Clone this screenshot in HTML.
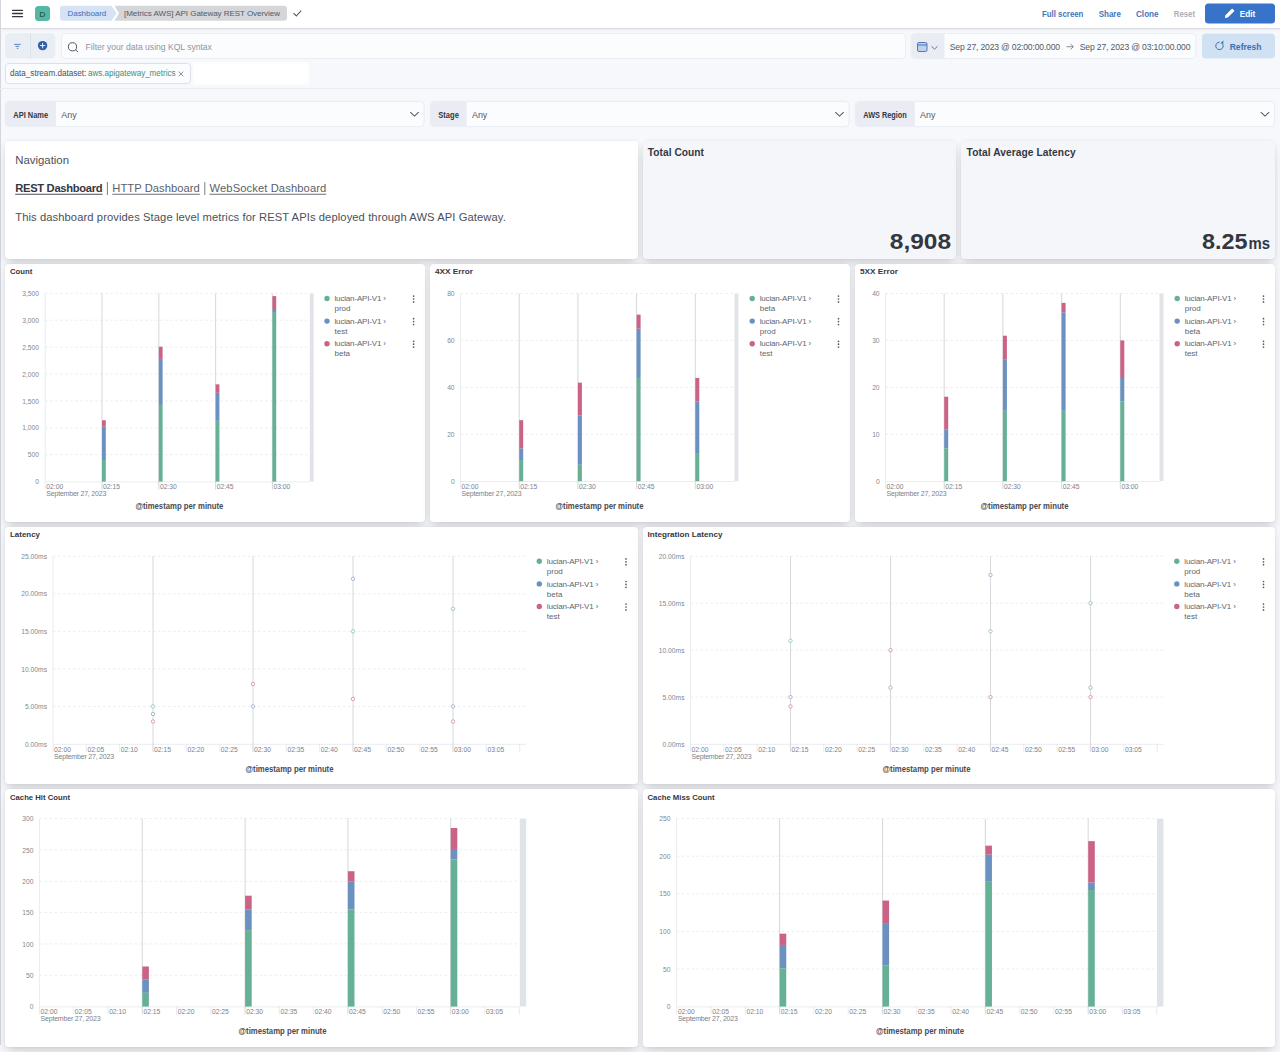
<!DOCTYPE html>
<html><head><meta charset="utf-8"><style>
html,body{margin:0;padding:0;}
body{width:1280px;height:1052px;overflow:hidden;position:relative;background:#F7F8FC;font-family:"Liberation Sans", sans-serif;}
.hdr{position:absolute;left:0;top:0;width:1280px;height:28px;background:#fff;box-shadow:0 1px 0 #D9DADF,0 2px 3px rgba(0,0,0,0.06);}
.lb{position:absolute;left:0;top:0;width:1px;height:1045px;background:#D3D6DC;}
.pnl{position:absolute;border-radius:4px;box-shadow:0 0.9px 4px -1px rgba(0,0,0,.08),0 2.6px 8px -1px rgba(0,0,0,.06),0 5.7px 12px -1px rgba(0,0,0,.05),0 15px 15px -1px rgba(0,0,0,.04);}
svg{position:absolute;left:0;top:0;}
text{font-family:"Liberation Sans", sans-serif;}
</style></head><body>
<div class="hdr"></div>
<div class="lb"></div>
<div class="pnl" style="left:5px;top:141.4px;width:632.5px;height:117.6px;background:#fff"></div>
<div class="pnl" style="left:642.5px;top:141.4px;width:313.75px;height:117.6px;background:#F4F6FA"></div>
<div class="pnl" style="left:961.25px;top:141.4px;width:313.75px;height:117.6px;background:#F4F6FA"></div>
<div class="pnl" style="left:5px;top:263.9px;width:420px;height:258.1px;background:#fff"></div>
<div class="pnl" style="left:430px;top:263.9px;width:420px;height:258.1px;background:#fff"></div>
<div class="pnl" style="left:855px;top:263.9px;width:420px;height:258.1px;background:#fff"></div>
<div class="pnl" style="left:5px;top:526.8px;width:632.5px;height:257.4000000000001px;background:#fff"></div>
<div class="pnl" style="left:642.5px;top:526.8px;width:632.5px;height:257.4000000000001px;background:#fff"></div>
<div class="pnl" style="left:5px;top:789.3px;width:632.5px;height:257.70000000000005px;background:#fff"></div>
<div class="pnl" style="left:642.5px;top:789.3px;width:632.5px;height:257.70000000000005px;background:#fff"></div>
<svg width="1280" height="1052" viewBox="0 0 1280 1052">
<defs><filter id="blur1" x="-10%" y="-30%" width="120%" height="160%"><feGaussianBlur stdDeviation="0.8"/></filter></defs>
<line x1="12.5" y1="10.3" x2="22.5" y2="10.3" stroke="#343741" stroke-width="1.3" stroke-linecap="round"/>
<line x1="12.5" y1="13.5" x2="22.5" y2="13.5" stroke="#343741" stroke-width="1.3" stroke-linecap="round"/>
<line x1="12.5" y1="16.6" x2="22.5" y2="16.6" stroke="#343741" stroke-width="1.3" stroke-linecap="round"/>
<rect x="35" y="6" width="15" height="15" rx="3.5" fill="#54B8A4"/>
<text x="42.5" y="16.6" font-size="8" fill="#1e3b33" text-anchor="middle">D</text>
<path d="M63,5.8 H111.6 L116.6,13.3 L111.6,20.8 H63 Q60,20.8 60,17.8 V8.8 Q60,5.8 63,5.8 Z" fill="#D5E3F5"/>
<text x="67.5" y="16.4" font-size="8" fill="#3F6DB5" text-anchor="start" textLength="38.8" lengthAdjust="spacing">Dashboard</text>
<path d="M114.4,5.8 H284 Q287,5.8 287,8.8 V17.8 Q287,20.8 284,20.8 H114.4 L119,13.3 Z" fill="#D5D6DA"/>
<text x="124" y="16.4" font-size="8" fill="#535966" text-anchor="start" textLength="156" lengthAdjust="spacing">[Metrics AWS] API Gateway REST Overview</text>
<path d="M293.5,13.2 L296.3,16 L301.2,10.6" fill="none" stroke="#535966" stroke-width="1.1"/>
<text x="1042" y="16.8" font-size="9" font-weight="bold" fill="#4674BA" text-anchor="start" textLength="41.4" lengthAdjust="spacingAndGlyphs">Full screen</text>
<text x="1098.7" y="16.8" font-size="9" font-weight="bold" fill="#4674BA" text-anchor="start" textLength="22.2" lengthAdjust="spacingAndGlyphs">Share</text>
<text x="1136" y="16.8" font-size="9" font-weight="bold" fill="#4674BA" text-anchor="start" textLength="22.6" lengthAdjust="spacingAndGlyphs">Clone</text>
<text x="1173.8" y="16.8" font-size="9" font-weight="bold" fill="#A7AFBC" text-anchor="start" textLength="21.2" lengthAdjust="spacingAndGlyphs">Reset</text>
<rect x="1205" y="3.5" width="70" height="20" rx="3.5" fill="#3773C8"/>
<path d="M1224.9,18.1 L1225.4,15.2 L1231.6,9.0 Q1232.2,8.4 1232.8,9.0 L1234.0,10.2 Q1234.6,10.8 1234.0,11.4 L1227.8,17.6 Z" fill="#fff"/>
<text x="1239.7" y="16.8" font-size="9" font-weight="bold" fill="#fff" text-anchor="start" textLength="15.6" lengthAdjust="spacingAndGlyphs">Edit</text>
<rect x="5.1" y="33.3" width="50.2" height="25.3" rx="4.5" fill="#E9EDF4"/>
<line x1="30.5" y1="33.5" x2="30.5" y2="58.5" stroke="#D9DEE7" stroke-width="0.8"/>
<line x1="14.1" y1="44.4" x2="20.7" y2="44.4" stroke="#3F6DB5" stroke-width="0.8"/>
<line x1="15.5" y1="46.4" x2="19.2" y2="46.4" stroke="#3F6DB5" stroke-width="0.8"/>
<line x1="16.8" y1="48.4" x2="18.3" y2="48.4" stroke="#3F6DB5" stroke-width="0.8"/>
<circle cx="42.6" cy="45.6" r="4.7" fill="#2C5EA9"/>
<line x1="39.9" y1="45.6" x2="45.3" y2="45.6" stroke="#fff" stroke-width="0.9"/>
<line x1="42.6" y1="42.9" x2="42.6" y2="48.3" stroke="#fff" stroke-width="0.9"/>
<rect x="61.5" y="33.5" width="844" height="25" rx="4" fill="#FBFCFD" stroke="#E6EAF0" stroke-width="0.8"/>
<circle cx="72.5" cy="46.8" r="4.1" fill="none" stroke="#535966" stroke-width="1"/>
<line x1="75.4" y1="49.7" x2="78" y2="52" stroke="#535966" stroke-width="1"/>
<text x="85.6" y="50" font-size="8.6" fill="#8E95A2" text-anchor="start" textLength="126.3" lengthAdjust="spacing">Filter your data using KQL syntax</text>
<rect x="911" y="33.5" width="285" height="25" rx="4" fill="#FBFCFD" stroke="#E6EAF0" stroke-width="0.8"/>
<path d="M915,33.9 H944.5 V58.1 H915 Q911.4,58.1 911.4,54.5 V37.5 Q911.4,33.9 915,33.9 Z" fill="#E9EDF3"/>
<rect x="917.5" y="42.5" width="9.5" height="9" rx="1.5" fill="#BFD2EC" stroke="#3F6DB5" stroke-width="0.9"/>
<line x1="917.5" y1="45" x2="927" y2="45" stroke="#3F6DB5" stroke-width="0.9"/>
<path d="M931.5,46.3 L934.5,49.2 L937.5,46.3" fill="none" stroke="#3F6DB5" stroke-width="0.9"/>
<text x="949.8" y="50" font-size="8.6" fill="#535966" text-anchor="start" textLength="110.3" lengthAdjust="spacing">Sep 27, 2023 @ 02:00:00.000</text>
<path d="M1066.5,46.7 H1073.3 M1070.6,44 L1073.3,46.7 L1070.6,49.4" fill="none" stroke="#69707D" stroke-width="0.8"/>
<text x="1079.8" y="50" font-size="8.6" fill="#535966" text-anchor="start" textLength="110.7" lengthAdjust="spacing">Sep 27, 2023 @ 03:10:00.000</text>
<rect x="1202" y="33.5" width="73" height="25" rx="4" fill="#CFE1F3"/>
<path d="M1222.7,44.1 A3.7,3.7 0 1 1 1219.6,42.2" fill="none" stroke="#3F6DB5" stroke-width="1.0"/>
<path d="M1223.4,40.6 L1223.4,43.8 L1220.4,43.6 Z" fill="#3F6DB5"/>
<text x="1229.7" y="49.7" font-size="9.2" font-weight="bold" fill="#3F6DB5" text-anchor="start" textLength="31.9" lengthAdjust="spacingAndGlyphs">Refresh</text>
<rect x="5.5" y="63.5" width="185" height="20" rx="3" fill="#FBFCFD" stroke="#D3DAE6" stroke-width="0.8"/>
<text x="10" y="75.9" font-size="8.5" fill="#4A4F58" text-anchor="start" textLength="76.3" lengthAdjust="spacingAndGlyphs">data_stream.dataset:</text>
<text x="88" y="75.9" font-size="8.5" fill="#418F7E" text-anchor="start" textLength="87.5" lengthAdjust="spacingAndGlyphs">aws.apigateway_metrics</text>
<path d="M178.7,71.6 L183.3,76.2 M183.3,71.6 L178.7,76.2" fill="none" stroke="#69707D" stroke-width="0.8"/>
<rect x="193" y="62.5" width="116" height="22" fill="#fff" filter="url(#blur1)"/>
<line x1="0" y1="88.5" x2="1280" y2="88.5" stroke="#E9ECF2" stroke-width="1"/>
<rect x="5.4" y="101.4" width="418.7" height="25.2" rx="4" fill="#FBFCFD" stroke="#E3E8F0" stroke-width="0.8"/>
<path d="M9.4,101.8 H56 V126.2 H9.4 Q5.8,126.2 5.8,122.6 V105.4 Q5.8,101.8 9.4,101.8 Z" fill="#E9EDF3"/>
<text x="13.3" y="117.8" font-size="8.2" font-weight="bold" fill="#343741" text-anchor="start" textLength="34.8" lengthAdjust="spacingAndGlyphs">API Name</text>
<text x="61.3" y="117.8" font-size="9.3" fill="#535966" text-anchor="start" textLength="15.3" lengthAdjust="spacingAndGlyphs">Any</text>
<path d="M410.3,112.2 L414.5,116.1 L418.7,112.2" fill="none" stroke="#535966" stroke-width="1.1"/>
<rect x="430.4" y="101.4" width="418.7" height="25.2" rx="4" fill="#FBFCFD" stroke="#E3E8F0" stroke-width="0.8"/>
<path d="M434.4,101.8 H466.7 V126.2 H434.4 Q430.8,126.2 430.8,122.6 V105.4 Q430.8,101.8 434.4,101.8 Z" fill="#E9EDF3"/>
<text x="438.3" y="117.8" font-size="8.2" font-weight="bold" fill="#343741" text-anchor="start" textLength="20.6" lengthAdjust="spacingAndGlyphs">Stage</text>
<text x="472.0" y="117.8" font-size="9.3" fill="#535966" text-anchor="start" textLength="15.3" lengthAdjust="spacingAndGlyphs">Any</text>
<path d="M835.3,112.2 L839.5,116.1 L843.7,112.2" fill="none" stroke="#535966" stroke-width="1.1"/>
<rect x="855.4" y="101.4" width="419.2" height="25.2" rx="4" fill="#FBFCFD" stroke="#E3E8F0" stroke-width="0.8"/>
<path d="M859.4,101.8 H914.8 V126.2 H859.4 Q855.8,126.2 855.8,122.6 V105.4 Q855.8,101.8 859.4,101.8 Z" fill="#E9EDF3"/>
<text x="863.3" y="117.8" font-size="8.2" font-weight="bold" fill="#343741" text-anchor="start" textLength="43.5" lengthAdjust="spacingAndGlyphs">AWS Region</text>
<text x="920.0999999999999" y="117.8" font-size="9.3" fill="#535966" text-anchor="start" textLength="15.3" lengthAdjust="spacingAndGlyphs">Any</text>
<path d="M1260.8,112.2 L1265,116.1 L1269.2,112.2" fill="none" stroke="#535966" stroke-width="1.1"/>
<text x="15.2" y="164.2" font-size="11.4" fill="#4B5059" text-anchor="start" textLength="53.8" lengthAdjust="spacing">Navigation</text>
<text x="15.2" y="192.2" font-size="11.2" font-weight="bold" fill="#343741" text-anchor="start" textLength="87.4" lengthAdjust="spacing">REST Dashboard</text>
<line x1="15.2" y1="194.2" x2="102.6" y2="194.2" stroke="#4A4E56" stroke-width="1.1"/>
<line x1="107.4" y1="182" x2="107.4" y2="195" stroke="#6B6F76" stroke-width="0.9"/>
<text x="112.3" y="192.2" font-size="11.2" fill="#5A5F68" text-anchor="start" textLength="87.5" lengthAdjust="spacing">HTTP Dashboard</text>
<line x1="112.3" y1="194.2" x2="199.8" y2="194.2" stroke="#6D717A" stroke-width="1.1"/>
<line x1="204.8" y1="182" x2="204.8" y2="195" stroke="#6B6F76" stroke-width="0.9"/>
<text x="209.5" y="192.2" font-size="11.2" fill="#5A5F68" text-anchor="start" textLength="116.8" lengthAdjust="spacing">WebSocket Dashboard</text>
<line x1="209.5" y1="194.2" x2="326.3" y2="194.2" stroke="#6D717A" stroke-width="1.1"/>
<text x="15.2" y="220.8" font-size="11.2" fill="#4B5059" text-anchor="start" textLength="490.6" lengthAdjust="spacing">This dashboard provides Stage level metrics for REST APIs deployed through AWS API Gateway.</text>
<text x="647.8" y="156" font-size="10.2" font-weight="bold" fill="#343741" text-anchor="start" textLength="56.2" lengthAdjust="spacing">Total Count</text>
<text x="951" y="249" font-size="22" font-weight="bold" fill="#343741" text-anchor="end" textLength="61.2" lengthAdjust="spacingAndGlyphs">8,908</text>
<text x="966.6" y="156" font-size="10.2" font-weight="bold" fill="#343741" text-anchor="start" textLength="109" lengthAdjust="spacing">Total Average Latency</text>
<text x="1247.4" y="249.2" font-size="22" font-weight="bold" fill="#343741" text-anchor="end" textLength="45.5" lengthAdjust="spacingAndGlyphs">8.25</text>
<text x="1270" y="249.2" font-size="16.5" font-weight="bold" fill="#343741" text-anchor="end" textLength="21.6" lengthAdjust="spacingAndGlyphs">ms</text>
<text x="10" y="274.09999999999997" font-size="8.1" font-weight="bold" fill="#343741" text-anchor="start" textLength="22.3" lengthAdjust="spacingAndGlyphs">Count</text>
<text x="39" y="484.20000000000005" font-size="7.2" fill="#81878F" text-anchor="end" textLength="3.72" lengthAdjust="spacingAndGlyphs">0</text>
<line x1="45.2" y1="454.70000000000005" x2="310" y2="454.70000000000005" stroke="#E6E9EE" stroke-width="0.8" stroke-dasharray="2.5,2.5"/>
<text x="39" y="457.30000000000007" font-size="7.2" fill="#81878F" text-anchor="end" textLength="11.17" lengthAdjust="spacingAndGlyphs">500</text>
<line x1="45.2" y1="427.8" x2="310" y2="427.8" stroke="#E6E9EE" stroke-width="0.8" stroke-dasharray="2.5,2.5"/>
<text x="39" y="430.40000000000003" font-size="7.2" fill="#81878F" text-anchor="end" textLength="16.76" lengthAdjust="spacingAndGlyphs">1,000</text>
<line x1="45.2" y1="400.9" x2="310" y2="400.9" stroke="#E6E9EE" stroke-width="0.8" stroke-dasharray="2.5,2.5"/>
<text x="39" y="403.5" font-size="7.2" fill="#81878F" text-anchor="end" textLength="16.76" lengthAdjust="spacingAndGlyphs">1,500</text>
<line x1="45.2" y1="374.0" x2="310" y2="374.0" stroke="#E6E9EE" stroke-width="0.8" stroke-dasharray="2.5,2.5"/>
<text x="39" y="376.6" font-size="7.2" fill="#81878F" text-anchor="end" textLength="16.76" lengthAdjust="spacingAndGlyphs">2,000</text>
<line x1="45.2" y1="347.1" x2="310" y2="347.1" stroke="#E6E9EE" stroke-width="0.8" stroke-dasharray="2.5,2.5"/>
<text x="39" y="349.70000000000005" font-size="7.2" fill="#81878F" text-anchor="end" textLength="16.76" lengthAdjust="spacingAndGlyphs">2,500</text>
<line x1="45.2" y1="320.2" x2="310" y2="320.2" stroke="#E6E9EE" stroke-width="0.8" stroke-dasharray="2.5,2.5"/>
<text x="39" y="322.8" font-size="7.2" fill="#81878F" text-anchor="end" textLength="16.76" lengthAdjust="spacingAndGlyphs">3,000</text>
<line x1="45.2" y1="293.3" x2="310" y2="293.3" stroke="#E6E9EE" stroke-width="0.8" stroke-dasharray="2.5,2.5"/>
<text x="39" y="295.90000000000003" font-size="7.2" fill="#81878F" text-anchor="end" textLength="16.76" lengthAdjust="spacingAndGlyphs">3,500</text>
<line x1="45.2" y1="293.3" x2="45.2" y2="481.6" stroke="#E9ECF1" stroke-width="1"/>
<line x1="45.2" y1="481.90000000000003" x2="310" y2="481.90000000000003" stroke="#E9ECF1" stroke-width="1"/>
<line x1="45.2" y1="481.6" x2="45.2" y2="489.6" stroke="#E3E6EB" stroke-width="0.8"/>
<text x="46.300000000000004" y="489.1" font-size="7.1" fill="#7B818C" text-anchor="start" textLength="16.88" lengthAdjust="spacingAndGlyphs">02:00</text>
<line x1="102.0" y1="293.3" x2="102.0" y2="489.6" stroke="#D9DADE" stroke-width="1.1"/>
<text x="103.1" y="489.1" font-size="7.1" fill="#7B818C" text-anchor="start" textLength="16.88" lengthAdjust="spacingAndGlyphs">02:15</text>
<line x1="158.8" y1="293.3" x2="158.8" y2="489.6" stroke="#D9DADE" stroke-width="1.1"/>
<text x="159.9" y="489.1" font-size="7.1" fill="#7B818C" text-anchor="start" textLength="16.88" lengthAdjust="spacingAndGlyphs">02:30</text>
<line x1="215.60000000000002" y1="293.3" x2="215.60000000000002" y2="489.6" stroke="#D9DADE" stroke-width="1.1"/>
<text x="216.70000000000002" y="489.1" font-size="7.1" fill="#7B818C" text-anchor="start" textLength="16.88" lengthAdjust="spacingAndGlyphs">02:45</text>
<line x1="272.4" y1="293.3" x2="272.4" y2="489.6" stroke="#D9DADE" stroke-width="1.1"/>
<text x="273.5" y="489.1" font-size="7.1" fill="#7B818C" text-anchor="start" textLength="16.88" lengthAdjust="spacingAndGlyphs">03:00</text>
<text x="46.300000000000004" y="496.20000000000005" font-size="7.0" fill="#7B818C" text-anchor="start" textLength="60" lengthAdjust="spacing">September 27, 2023</text>
<rect x="309.8" y="293.3" width="3.8000000000000114" height="188.3" rx="0" fill="#E0E3E8"/>
<rect x="102.0" y="460.08000000000004" width="3.8" height="21.519999999999982" rx="0" fill="#66B196"/>
<rect x="102.0" y="426.72400000000005" width="3.8" height="33.355999999999995" rx="0" fill="#6A91C0"/>
<rect x="102.0" y="420.26800000000003" width="3.8" height="6.456000000000017" rx="0" fill="#CA6386"/>
<rect x="158.8" y="404.935" width="3.8" height="76.66500000000002" rx="0" fill="#66B196"/>
<rect x="158.8" y="358.8822" width="3.8" height="46.05279999999999" rx="0" fill="#6A91C0"/>
<rect x="158.8" y="346.7234" width="3.8" height="12.158799999999985" rx="0" fill="#CA6386"/>
<rect x="215.60000000000002" y="420.80600000000004" width="3.8" height="60.79399999999998" rx="0" fill="#66B196"/>
<rect x="215.60000000000002" y="392.83000000000004" width="3.8" height="27.976" rx="0" fill="#6A91C0"/>
<rect x="215.60000000000002" y="384.3296" width="3.8" height="8.500400000000013" rx="0" fill="#CA6386"/>
<rect x="272.4" y="312.0224" width="3.8" height="169.57760000000002" rx="0" fill="#66B196"/>
<rect x="272.4" y="309.978" width="3.8" height="2.044399999999996" rx="0" fill="#6A91C0"/>
<rect x="272.4" y="296.09760000000006" width="3.8" height="13.880399999999952" rx="0" fill="#CA6386"/>
<circle cx="327" cy="298.5" r="2.7" fill="#66B196"/>
<text x="334.5" y="301.1" font-size="8" fill="#60666F" text-anchor="start" textLength="51.5" lengthAdjust="spacing">lucian-API-V1 ›</text>
<text x="334.5" y="311.1" font-size="8" fill="#60666F" text-anchor="start">prod</text>
<circle cx="413.6" cy="296.1" r="0.85" fill="#535966"/>
<circle cx="413.6" cy="299.0" r="0.85" fill="#535966"/>
<circle cx="413.6" cy="301.9" r="0.85" fill="#535966"/>
<circle cx="327" cy="321.1" r="2.7" fill="#6A91C0"/>
<text x="334.5" y="323.70000000000005" font-size="8" fill="#60666F" text-anchor="start" textLength="51.5" lengthAdjust="spacing">lucian-API-V1 ›</text>
<text x="334.5" y="333.70000000000005" font-size="8" fill="#60666F" text-anchor="start">test</text>
<circle cx="413.6" cy="318.70000000000005" r="0.85" fill="#535966"/>
<circle cx="413.6" cy="321.6" r="0.85" fill="#535966"/>
<circle cx="413.6" cy="324.5" r="0.85" fill="#535966"/>
<circle cx="327" cy="343.7" r="2.7" fill="#CA6386"/>
<text x="334.5" y="346.3" font-size="8" fill="#60666F" text-anchor="start" textLength="51.5" lengthAdjust="spacing">lucian-API-V1 ›</text>
<text x="334.5" y="356.3" font-size="8" fill="#60666F" text-anchor="start">beta</text>
<circle cx="413.6" cy="341.3" r="0.85" fill="#535966"/>
<circle cx="413.6" cy="344.2" r="0.85" fill="#535966"/>
<circle cx="413.6" cy="347.09999999999997" r="0.85" fill="#535966"/>
<text x="179.4" y="509.4" font-size="8.4" font-weight="bold" fill="#484C55" text-anchor="middle" textLength="88" lengthAdjust="spacingAndGlyphs">@timestamp per minute</text>
<text x="435" y="274.09999999999997" font-size="8.1" font-weight="bold" fill="#343741" text-anchor="start" textLength="38" lengthAdjust="spacingAndGlyphs">4XX Error</text>
<text x="454.6" y="483.8" font-size="7.2" fill="#81878F" text-anchor="end" textLength="3.72" lengthAdjust="spacingAndGlyphs">0</text>
<line x1="460.5" y1="434.275" x2="734.5" y2="434.275" stroke="#E6E9EE" stroke-width="0.8" stroke-dasharray="2.5,2.5"/>
<text x="454.6" y="436.875" font-size="7.2" fill="#81878F" text-anchor="end" textLength="7.45" lengthAdjust="spacingAndGlyphs">20</text>
<line x1="460.5" y1="387.35" x2="734.5" y2="387.35" stroke="#E6E9EE" stroke-width="0.8" stroke-dasharray="2.5,2.5"/>
<text x="454.6" y="389.95000000000005" font-size="7.2" fill="#81878F" text-anchor="end" textLength="7.45" lengthAdjust="spacingAndGlyphs">40</text>
<line x1="460.5" y1="340.425" x2="734.5" y2="340.425" stroke="#E6E9EE" stroke-width="0.8" stroke-dasharray="2.5,2.5"/>
<text x="454.6" y="343.02500000000003" font-size="7.2" fill="#81878F" text-anchor="end" textLength="7.45" lengthAdjust="spacingAndGlyphs">60</text>
<line x1="460.5" y1="293.5" x2="734.5" y2="293.5" stroke="#E6E9EE" stroke-width="0.8" stroke-dasharray="2.5,2.5"/>
<text x="454.6" y="296.1" font-size="7.2" fill="#81878F" text-anchor="end" textLength="7.45" lengthAdjust="spacingAndGlyphs">80</text>
<line x1="460.5" y1="293.5" x2="460.5" y2="481.2" stroke="#E9ECF1" stroke-width="1"/>
<line x1="460.5" y1="481.5" x2="734.5" y2="481.5" stroke="#E9ECF1" stroke-width="1"/>
<line x1="460.5" y1="481.2" x2="460.5" y2="489.2" stroke="#E3E6EB" stroke-width="0.8"/>
<text x="461.6" y="488.7" font-size="7.1" fill="#7B818C" text-anchor="start" textLength="16.88" lengthAdjust="spacingAndGlyphs">02:00</text>
<line x1="519.2" y1="293.5" x2="519.2" y2="489.2" stroke="#D9DADE" stroke-width="1.1"/>
<text x="520.3000000000001" y="488.7" font-size="7.1" fill="#7B818C" text-anchor="start" textLength="16.88" lengthAdjust="spacingAndGlyphs">02:15</text>
<line x1="577.9" y1="293.5" x2="577.9" y2="489.2" stroke="#D9DADE" stroke-width="1.1"/>
<text x="579.0" y="488.7" font-size="7.1" fill="#7B818C" text-anchor="start" textLength="16.88" lengthAdjust="spacingAndGlyphs">02:30</text>
<line x1="636.6" y1="293.5" x2="636.6" y2="489.2" stroke="#D9DADE" stroke-width="1.1"/>
<text x="637.7" y="488.7" font-size="7.1" fill="#7B818C" text-anchor="start" textLength="16.88" lengthAdjust="spacingAndGlyphs">02:45</text>
<line x1="695.3" y1="293.5" x2="695.3" y2="489.2" stroke="#D9DADE" stroke-width="1.1"/>
<text x="696.4" y="488.7" font-size="7.1" fill="#7B818C" text-anchor="start" textLength="16.88" lengthAdjust="spacingAndGlyphs">03:00</text>
<text x="461.6" y="495.8" font-size="7.0" fill="#7B818C" text-anchor="start" textLength="60" lengthAdjust="spacing">September 27, 2023</text>
<rect x="734.5" y="293.5" width="3.8999999999999773" height="187.7" rx="0" fill="#E0E3E8"/>
<rect x="519.2" y="460.08375" width="4" height="21.11624999999998" rx="0" fill="#66B196"/>
<rect x="519.2" y="448.35249999999996" width="4" height="11.731250000000045" rx="0" fill="#6A91C0"/>
<rect x="519.2" y="420.1975" width="4" height="28.154999999999973" rx="0" fill="#CA6386"/>
<rect x="577.9" y="464.77625" width="4" height="16.423749999999984" rx="0" fill="#66B196"/>
<rect x="577.9" y="415.505" width="4" height="49.27125000000001" rx="0" fill="#6A91C0"/>
<rect x="577.9" y="382.6575" width="4" height="32.84749999999997" rx="0" fill="#CA6386"/>
<rect x="636.6" y="377.96500000000003" width="4" height="103.23499999999996" rx="0" fill="#66B196"/>
<rect x="636.6" y="328.69375" width="4" height="49.27125000000001" rx="0" fill="#6A91C0"/>
<rect x="636.6" y="314.61625000000004" width="4" height="14.077499999999986" rx="0" fill="#CA6386"/>
<rect x="695.3" y="453.045" width="4" height="28.154999999999973" rx="0" fill="#66B196"/>
<rect x="695.3" y="401.4275" width="4" height="51.61750000000001" rx="0" fill="#6A91C0"/>
<rect x="695.3" y="377.96500000000003" width="4" height="23.462499999999977" rx="0" fill="#CA6386"/>
<circle cx="752.2" cy="298.5" r="2.7" fill="#66B196"/>
<text x="759.7" y="301.1" font-size="8" fill="#60666F" text-anchor="start" textLength="51.5" lengthAdjust="spacing">lucian-API-V1 ›</text>
<text x="759.7" y="311.1" font-size="8" fill="#60666F" text-anchor="start">beta</text>
<circle cx="838.5" cy="296.1" r="0.85" fill="#535966"/>
<circle cx="838.5" cy="299.0" r="0.85" fill="#535966"/>
<circle cx="838.5" cy="301.9" r="0.85" fill="#535966"/>
<circle cx="752.2" cy="321.1" r="2.7" fill="#6A91C0"/>
<text x="759.7" y="323.70000000000005" font-size="8" fill="#60666F" text-anchor="start" textLength="51.5" lengthAdjust="spacing">lucian-API-V1 ›</text>
<text x="759.7" y="333.70000000000005" font-size="8" fill="#60666F" text-anchor="start">prod</text>
<circle cx="838.5" cy="318.70000000000005" r="0.85" fill="#535966"/>
<circle cx="838.5" cy="321.6" r="0.85" fill="#535966"/>
<circle cx="838.5" cy="324.5" r="0.85" fill="#535966"/>
<circle cx="752.2" cy="343.7" r="2.7" fill="#CA6386"/>
<text x="759.7" y="346.3" font-size="8" fill="#60666F" text-anchor="start" textLength="51.5" lengthAdjust="spacing">lucian-API-V1 ›</text>
<text x="759.7" y="356.3" font-size="8" fill="#60666F" text-anchor="start">test</text>
<circle cx="838.5" cy="341.3" r="0.85" fill="#535966"/>
<circle cx="838.5" cy="344.2" r="0.85" fill="#535966"/>
<circle cx="838.5" cy="347.09999999999997" r="0.85" fill="#535966"/>
<text x="599.5" y="509.4" font-size="8.4" font-weight="bold" fill="#484C55" text-anchor="middle" textLength="88" lengthAdjust="spacingAndGlyphs">@timestamp per minute</text>
<text x="860" y="274.09999999999997" font-size="8.1" font-weight="bold" fill="#343741" text-anchor="start" textLength="38" lengthAdjust="spacingAndGlyphs">5XX Error</text>
<text x="879.6" y="483.8" font-size="7.2" fill="#81878F" text-anchor="end" textLength="3.72" lengthAdjust="spacingAndGlyphs">0</text>
<line x1="885.5" y1="434.275" x2="1159.5" y2="434.275" stroke="#E6E9EE" stroke-width="0.8" stroke-dasharray="2.5,2.5"/>
<text x="879.6" y="436.875" font-size="7.2" fill="#81878F" text-anchor="end" textLength="7.45" lengthAdjust="spacingAndGlyphs">10</text>
<line x1="885.5" y1="387.35" x2="1159.5" y2="387.35" stroke="#E6E9EE" stroke-width="0.8" stroke-dasharray="2.5,2.5"/>
<text x="879.6" y="389.95000000000005" font-size="7.2" fill="#81878F" text-anchor="end" textLength="7.45" lengthAdjust="spacingAndGlyphs">20</text>
<line x1="885.5" y1="340.425" x2="1159.5" y2="340.425" stroke="#E6E9EE" stroke-width="0.8" stroke-dasharray="2.5,2.5"/>
<text x="879.6" y="343.02500000000003" font-size="7.2" fill="#81878F" text-anchor="end" textLength="7.45" lengthAdjust="spacingAndGlyphs">30</text>
<line x1="885.5" y1="293.5" x2="1159.5" y2="293.5" stroke="#E6E9EE" stroke-width="0.8" stroke-dasharray="2.5,2.5"/>
<text x="879.6" y="296.1" font-size="7.2" fill="#81878F" text-anchor="end" textLength="7.45" lengthAdjust="spacingAndGlyphs">40</text>
<line x1="885.5" y1="293.5" x2="885.5" y2="481.2" stroke="#E9ECF1" stroke-width="1"/>
<line x1="885.5" y1="481.5" x2="1159.5" y2="481.5" stroke="#E9ECF1" stroke-width="1"/>
<line x1="885.5" y1="481.2" x2="885.5" y2="489.2" stroke="#E3E6EB" stroke-width="0.8"/>
<text x="886.6" y="488.7" font-size="7.1" fill="#7B818C" text-anchor="start" textLength="16.88" lengthAdjust="spacingAndGlyphs">02:00</text>
<line x1="944.2" y1="293.5" x2="944.2" y2="489.2" stroke="#D9DADE" stroke-width="1.1"/>
<text x="945.3000000000001" y="488.7" font-size="7.1" fill="#7B818C" text-anchor="start" textLength="16.88" lengthAdjust="spacingAndGlyphs">02:15</text>
<line x1="1002.9" y1="293.5" x2="1002.9" y2="489.2" stroke="#D9DADE" stroke-width="1.1"/>
<text x="1004.0" y="488.7" font-size="7.1" fill="#7B818C" text-anchor="start" textLength="16.88" lengthAdjust="spacingAndGlyphs">02:30</text>
<line x1="1061.6" y1="293.5" x2="1061.6" y2="489.2" stroke="#D9DADE" stroke-width="1.1"/>
<text x="1062.6999999999998" y="488.7" font-size="7.1" fill="#7B818C" text-anchor="start" textLength="16.88" lengthAdjust="spacingAndGlyphs">02:45</text>
<line x1="1120.3" y1="293.5" x2="1120.3" y2="489.2" stroke="#D9DADE" stroke-width="1.1"/>
<text x="1121.3999999999999" y="488.7" font-size="7.1" fill="#7B818C" text-anchor="start" textLength="16.88" lengthAdjust="spacingAndGlyphs">03:00</text>
<text x="886.6" y="495.8" font-size="7.0" fill="#7B818C" text-anchor="start" textLength="60" lengthAdjust="spacing">September 27, 2023</text>
<rect x="1159.5" y="293.5" width="3.900000000000091" height="187.7" rx="0" fill="#E0E3E8"/>
<rect x="944.2" y="448.35249999999996" width="4" height="32.847500000000025" rx="0" fill="#66B196"/>
<rect x="944.2" y="429.5825" width="4" height="18.769999999999982" rx="0" fill="#6A91C0"/>
<rect x="944.2" y="396.735" width="4" height="32.84749999999997" rx="0" fill="#CA6386"/>
<rect x="1002.9" y="410.8125" width="4" height="70.38749999999999" rx="0" fill="#66B196"/>
<rect x="1002.9" y="359.195" width="4" height="51.61750000000001" rx="0" fill="#6A91C0"/>
<rect x="1002.9" y="335.73249999999996" width="4" height="23.462500000000034" rx="0" fill="#CA6386"/>
<rect x="1061.6" y="410.8125" width="4" height="70.38749999999999" rx="0" fill="#66B196"/>
<rect x="1061.6" y="312.27" width="4" height="98.54250000000002" rx="0" fill="#6A91C0"/>
<rect x="1061.6" y="302.885" width="4" height="9.384999999999991" rx="0" fill="#CA6386"/>
<rect x="1120.3" y="401.4275" width="4" height="79.77249999999998" rx="0" fill="#66B196"/>
<rect x="1120.3" y="377.96500000000003" width="4" height="23.462499999999977" rx="0" fill="#6A91C0"/>
<rect x="1120.3" y="340.42499999999995" width="4" height="37.54000000000008" rx="0" fill="#CA6386"/>
<circle cx="1177.2" cy="298.5" r="2.7" fill="#66B196"/>
<text x="1184.7" y="301.1" font-size="8" fill="#60666F" text-anchor="start" textLength="51.5" lengthAdjust="spacing">lucian-API-V1 ›</text>
<text x="1184.7" y="311.1" font-size="8" fill="#60666F" text-anchor="start">prod</text>
<circle cx="1263.5" cy="296.1" r="0.85" fill="#535966"/>
<circle cx="1263.5" cy="299.0" r="0.85" fill="#535966"/>
<circle cx="1263.5" cy="301.9" r="0.85" fill="#535966"/>
<circle cx="1177.2" cy="321.1" r="2.7" fill="#6A91C0"/>
<text x="1184.7" y="323.70000000000005" font-size="8" fill="#60666F" text-anchor="start" textLength="51.5" lengthAdjust="spacing">lucian-API-V1 ›</text>
<text x="1184.7" y="333.70000000000005" font-size="8" fill="#60666F" text-anchor="start">beta</text>
<circle cx="1263.5" cy="318.70000000000005" r="0.85" fill="#535966"/>
<circle cx="1263.5" cy="321.6" r="0.85" fill="#535966"/>
<circle cx="1263.5" cy="324.5" r="0.85" fill="#535966"/>
<circle cx="1177.2" cy="343.7" r="2.7" fill="#CA6386"/>
<text x="1184.7" y="346.3" font-size="8" fill="#60666F" text-anchor="start" textLength="51.5" lengthAdjust="spacing">lucian-API-V1 ›</text>
<text x="1184.7" y="356.3" font-size="8" fill="#60666F" text-anchor="start">test</text>
<circle cx="1263.5" cy="341.3" r="0.85" fill="#535966"/>
<circle cx="1263.5" cy="344.2" r="0.85" fill="#535966"/>
<circle cx="1263.5" cy="347.09999999999997" r="0.85" fill="#535966"/>
<text x="1024.5" y="509.4" font-size="8.4" font-weight="bold" fill="#484C55" text-anchor="middle" textLength="88" lengthAdjust="spacingAndGlyphs">@timestamp per minute</text>
<text x="10" y="537.0" font-size="8.1" font-weight="bold" fill="#343741" text-anchor="start" textLength="30" lengthAdjust="spacingAndGlyphs">Latency</text>
<text x="47" y="746.6" font-size="7.2" fill="#81878F" text-anchor="end" textLength="21.96" lengthAdjust="spacingAndGlyphs">0.00ms</text>
<line x1="53" y1="706.45" x2="526" y2="706.45" stroke="#E6E9EE" stroke-width="0.8" stroke-dasharray="2.5,2.5"/>
<text x="47" y="709.0500000000001" font-size="7.2" fill="#81878F" text-anchor="end" textLength="21.96" lengthAdjust="spacingAndGlyphs">5.00ms</text>
<line x1="53" y1="668.9" x2="526" y2="668.9" stroke="#E6E9EE" stroke-width="0.8" stroke-dasharray="2.5,2.5"/>
<text x="47" y="671.5" font-size="7.2" fill="#81878F" text-anchor="end" textLength="25.68" lengthAdjust="spacingAndGlyphs">10.00ms</text>
<line x1="53" y1="631.35" x2="526" y2="631.35" stroke="#E6E9EE" stroke-width="0.8" stroke-dasharray="2.5,2.5"/>
<text x="47" y="633.95" font-size="7.2" fill="#81878F" text-anchor="end" textLength="25.68" lengthAdjust="spacingAndGlyphs">15.00ms</text>
<line x1="53" y1="593.8" x2="526" y2="593.8" stroke="#E6E9EE" stroke-width="0.8" stroke-dasharray="2.5,2.5"/>
<text x="47" y="596.4" font-size="7.2" fill="#81878F" text-anchor="end" textLength="25.68" lengthAdjust="spacingAndGlyphs">20.00ms</text>
<line x1="53" y1="556.25" x2="526" y2="556.25" stroke="#E6E9EE" stroke-width="0.8" stroke-dasharray="2.5,2.5"/>
<text x="47" y="558.85" font-size="7.2" fill="#81878F" text-anchor="end" textLength="25.68" lengthAdjust="spacingAndGlyphs">25.00ms</text>
<line x1="53" y1="556.25" x2="53" y2="744" stroke="#E9ECF1" stroke-width="1"/>
<line x1="53" y1="744.3" x2="526" y2="744.3" stroke="#E9ECF1" stroke-width="1"/>
<line x1="53.0" y1="744" x2="53.0" y2="752" stroke="#E3E6EB" stroke-width="0.8"/>
<text x="54.1" y="751.5" font-size="7.1" fill="#7B818C" text-anchor="start" textLength="16.88" lengthAdjust="spacingAndGlyphs">02:00</text>
<line x1="86.33333333333334" y1="744" x2="86.33333333333334" y2="752" stroke="#E3E6EB" stroke-width="0.8"/>
<text x="87.43333333333334" y="751.5" font-size="7.1" fill="#7B818C" text-anchor="start" textLength="16.88" lengthAdjust="spacingAndGlyphs">02:05</text>
<line x1="119.66666666666667" y1="744" x2="119.66666666666667" y2="752" stroke="#E3E6EB" stroke-width="0.8"/>
<text x="120.76666666666667" y="751.5" font-size="7.1" fill="#7B818C" text-anchor="start" textLength="16.88" lengthAdjust="spacingAndGlyphs">02:10</text>
<line x1="153.0" y1="556.25" x2="153.0" y2="752" stroke="#D9DADE" stroke-width="1.1"/>
<text x="154.1" y="751.5" font-size="7.1" fill="#7B818C" text-anchor="start" textLength="16.88" lengthAdjust="spacingAndGlyphs">02:15</text>
<line x1="186.33333333333334" y1="744" x2="186.33333333333334" y2="752" stroke="#E3E6EB" stroke-width="0.8"/>
<text x="187.43333333333334" y="751.5" font-size="7.1" fill="#7B818C" text-anchor="start" textLength="16.88" lengthAdjust="spacingAndGlyphs">02:20</text>
<line x1="219.66666666666669" y1="744" x2="219.66666666666669" y2="752" stroke="#E3E6EB" stroke-width="0.8"/>
<text x="220.76666666666668" y="751.5" font-size="7.1" fill="#7B818C" text-anchor="start" textLength="16.88" lengthAdjust="spacingAndGlyphs">02:25</text>
<line x1="253.0" y1="556.25" x2="253.0" y2="752" stroke="#D9DADE" stroke-width="1.1"/>
<text x="254.1" y="751.5" font-size="7.1" fill="#7B818C" text-anchor="start" textLength="16.88" lengthAdjust="spacingAndGlyphs">02:30</text>
<line x1="286.33333333333337" y1="744" x2="286.33333333333337" y2="752" stroke="#E3E6EB" stroke-width="0.8"/>
<text x="287.4333333333334" y="751.5" font-size="7.1" fill="#7B818C" text-anchor="start" textLength="16.88" lengthAdjust="spacingAndGlyphs">02:35</text>
<line x1="319.6666666666667" y1="744" x2="319.6666666666667" y2="752" stroke="#E3E6EB" stroke-width="0.8"/>
<text x="320.7666666666667" y="751.5" font-size="7.1" fill="#7B818C" text-anchor="start" textLength="16.88" lengthAdjust="spacingAndGlyphs">02:40</text>
<line x1="353.0" y1="556.25" x2="353.0" y2="752" stroke="#D9DADE" stroke-width="1.1"/>
<text x="354.1" y="751.5" font-size="7.1" fill="#7B818C" text-anchor="start" textLength="16.88" lengthAdjust="spacingAndGlyphs">02:45</text>
<line x1="386.33333333333337" y1="744" x2="386.33333333333337" y2="752" stroke="#E3E6EB" stroke-width="0.8"/>
<text x="387.4333333333334" y="751.5" font-size="7.1" fill="#7B818C" text-anchor="start" textLength="16.88" lengthAdjust="spacingAndGlyphs">02:50</text>
<line x1="419.6666666666667" y1="744" x2="419.6666666666667" y2="752" stroke="#E3E6EB" stroke-width="0.8"/>
<text x="420.7666666666667" y="751.5" font-size="7.1" fill="#7B818C" text-anchor="start" textLength="16.88" lengthAdjust="spacingAndGlyphs">02:55</text>
<line x1="453.0" y1="556.25" x2="453.0" y2="752" stroke="#D9DADE" stroke-width="1.1"/>
<text x="454.1" y="751.5" font-size="7.1" fill="#7B818C" text-anchor="start" textLength="16.88" lengthAdjust="spacingAndGlyphs">03:00</text>
<line x1="486.33333333333337" y1="744" x2="486.33333333333337" y2="752" stroke="#E3E6EB" stroke-width="0.8"/>
<text x="487.4333333333334" y="751.5" font-size="7.1" fill="#7B818C" text-anchor="start" textLength="16.88" lengthAdjust="spacingAndGlyphs">03:05</text>
<line x1="519.6666666666667" y1="744" x2="519.6666666666667" y2="752" stroke="#E3E6EB" stroke-width="0.8"/>
<text x="54.1" y="758.6" font-size="7.0" fill="#7B818C" text-anchor="start" textLength="60" lengthAdjust="spacing">September 27, 2023</text>
<circle cx="153.0" cy="706.45" r="1.7" fill="#fff" stroke="#66B196" stroke-width="0.8" stroke-opacity="0.75"/>
<circle cx="153.0" cy="713.96" r="1.7" fill="#fff" stroke="#6A91C0" stroke-width="0.8" stroke-opacity="0.75"/>
<circle cx="153.0" cy="721.47" r="1.7" fill="#fff" stroke="#CA6386" stroke-width="0.8" stroke-opacity="0.75"/>
<circle cx="253.0" cy="683.92" r="1.7" fill="#fff" stroke="#CA6386" stroke-width="0.8" stroke-opacity="0.75"/>
<circle cx="253.0" cy="706.45" r="1.7" fill="#fff" stroke="#6A91C0" stroke-width="0.8" stroke-opacity="0.75"/>
<circle cx="353.0" cy="578.78" r="1.7" fill="#fff" stroke="#6A91C0" stroke-width="0.8" stroke-opacity="0.75"/>
<circle cx="353.0" cy="631.35" r="1.7" fill="#fff" stroke="#66B196" stroke-width="0.8" stroke-opacity="0.75"/>
<circle cx="353.0" cy="698.94" r="1.7" fill="#fff" stroke="#CA6386" stroke-width="0.8" stroke-opacity="0.75"/>
<circle cx="453.0" cy="608.8199999999999" r="1.7" fill="#fff" stroke="#66B196" stroke-width="0.8" stroke-opacity="0.75"/>
<circle cx="453.0" cy="706.45" r="1.7" fill="#fff" stroke="#6A91C0" stroke-width="0.8" stroke-opacity="0.75"/>
<circle cx="453.0" cy="721.47" r="1.7" fill="#fff" stroke="#CA6386" stroke-width="0.8" stroke-opacity="0.75"/>
<circle cx="539.3" cy="561.3" r="2.7" fill="#66B196"/>
<text x="546.8" y="563.9" font-size="8" fill="#60666F" text-anchor="start" textLength="51.5" lengthAdjust="spacing">lucian-API-V1 ›</text>
<text x="546.8" y="573.9" font-size="8" fill="#60666F" text-anchor="start">prod</text>
<circle cx="626" cy="558.9" r="0.85" fill="#535966"/>
<circle cx="626" cy="561.8" r="0.85" fill="#535966"/>
<circle cx="626" cy="564.6999999999999" r="0.85" fill="#535966"/>
<circle cx="539.3" cy="583.9" r="2.7" fill="#6A91C0"/>
<text x="546.8" y="586.5" font-size="8" fill="#60666F" text-anchor="start" textLength="51.5" lengthAdjust="spacing">lucian-API-V1 ›</text>
<text x="546.8" y="596.5" font-size="8" fill="#60666F" text-anchor="start">beta</text>
<circle cx="626" cy="581.5" r="0.85" fill="#535966"/>
<circle cx="626" cy="584.4" r="0.85" fill="#535966"/>
<circle cx="626" cy="587.3" r="0.85" fill="#535966"/>
<circle cx="539.3" cy="606.5" r="2.7" fill="#CA6386"/>
<text x="546.8" y="609.1" font-size="8" fill="#60666F" text-anchor="start" textLength="51.5" lengthAdjust="spacing">lucian-API-V1 ›</text>
<text x="546.8" y="619.1" font-size="8" fill="#60666F" text-anchor="start">test</text>
<circle cx="626" cy="604.1" r="0.85" fill="#535966"/>
<circle cx="626" cy="607.0" r="0.85" fill="#535966"/>
<circle cx="626" cy="609.9" r="0.85" fill="#535966"/>
<text x="289.5" y="772.0" font-size="8.4" font-weight="bold" fill="#484C55" text-anchor="middle" textLength="88" lengthAdjust="spacingAndGlyphs">@timestamp per minute</text>
<text x="647.5" y="537.0" font-size="8.1" font-weight="bold" fill="#343741" text-anchor="start" textLength="75" lengthAdjust="spacingAndGlyphs">Integration Latency</text>
<text x="684.5" y="746.6" font-size="7.2" fill="#81878F" text-anchor="end" textLength="21.96" lengthAdjust="spacingAndGlyphs">0.00ms</text>
<line x1="690.5" y1="697.0625" x2="1163.5" y2="697.0625" stroke="#E6E9EE" stroke-width="0.8" stroke-dasharray="2.5,2.5"/>
<text x="684.5" y="699.6625" font-size="7.2" fill="#81878F" text-anchor="end" textLength="21.96" lengthAdjust="spacingAndGlyphs">5.00ms</text>
<line x1="690.5" y1="650.125" x2="1163.5" y2="650.125" stroke="#E6E9EE" stroke-width="0.8" stroke-dasharray="2.5,2.5"/>
<text x="684.5" y="652.725" font-size="7.2" fill="#81878F" text-anchor="end" textLength="25.68" lengthAdjust="spacingAndGlyphs">10.00ms</text>
<line x1="690.5" y1="603.1875" x2="1163.5" y2="603.1875" stroke="#E6E9EE" stroke-width="0.8" stroke-dasharray="2.5,2.5"/>
<text x="684.5" y="605.7875" font-size="7.2" fill="#81878F" text-anchor="end" textLength="25.68" lengthAdjust="spacingAndGlyphs">15.00ms</text>
<line x1="690.5" y1="556.25" x2="1163.5" y2="556.25" stroke="#E6E9EE" stroke-width="0.8" stroke-dasharray="2.5,2.5"/>
<text x="684.5" y="558.85" font-size="7.2" fill="#81878F" text-anchor="end" textLength="25.68" lengthAdjust="spacingAndGlyphs">20.00ms</text>
<line x1="690.5" y1="556.25" x2="690.5" y2="744" stroke="#E9ECF1" stroke-width="1"/>
<line x1="690.5" y1="744.3" x2="1163.5" y2="744.3" stroke="#E9ECF1" stroke-width="1"/>
<line x1="690.5" y1="744" x2="690.5" y2="752" stroke="#E3E6EB" stroke-width="0.8"/>
<text x="691.6" y="751.5" font-size="7.1" fill="#7B818C" text-anchor="start" textLength="16.88" lengthAdjust="spacingAndGlyphs">02:00</text>
<line x1="723.8333333333334" y1="744" x2="723.8333333333334" y2="752" stroke="#E3E6EB" stroke-width="0.8"/>
<text x="724.9333333333334" y="751.5" font-size="7.1" fill="#7B818C" text-anchor="start" textLength="16.88" lengthAdjust="spacingAndGlyphs">02:05</text>
<line x1="757.1666666666666" y1="744" x2="757.1666666666666" y2="752" stroke="#E3E6EB" stroke-width="0.8"/>
<text x="758.2666666666667" y="751.5" font-size="7.1" fill="#7B818C" text-anchor="start" textLength="16.88" lengthAdjust="spacingAndGlyphs">02:10</text>
<line x1="790.5" y1="556.25" x2="790.5" y2="752" stroke="#D9DADE" stroke-width="1.1"/>
<text x="791.6" y="751.5" font-size="7.1" fill="#7B818C" text-anchor="start" textLength="16.88" lengthAdjust="spacingAndGlyphs">02:15</text>
<line x1="823.8333333333334" y1="744" x2="823.8333333333334" y2="752" stroke="#E3E6EB" stroke-width="0.8"/>
<text x="824.9333333333334" y="751.5" font-size="7.1" fill="#7B818C" text-anchor="start" textLength="16.88" lengthAdjust="spacingAndGlyphs">02:20</text>
<line x1="857.1666666666667" y1="744" x2="857.1666666666667" y2="752" stroke="#E3E6EB" stroke-width="0.8"/>
<text x="858.2666666666668" y="751.5" font-size="7.1" fill="#7B818C" text-anchor="start" textLength="16.88" lengthAdjust="spacingAndGlyphs">02:25</text>
<line x1="890.5" y1="556.25" x2="890.5" y2="752" stroke="#D9DADE" stroke-width="1.1"/>
<text x="891.6" y="751.5" font-size="7.1" fill="#7B818C" text-anchor="start" textLength="16.88" lengthAdjust="spacingAndGlyphs">02:30</text>
<line x1="923.8333333333334" y1="744" x2="923.8333333333334" y2="752" stroke="#E3E6EB" stroke-width="0.8"/>
<text x="924.9333333333334" y="751.5" font-size="7.1" fill="#7B818C" text-anchor="start" textLength="16.88" lengthAdjust="spacingAndGlyphs">02:35</text>
<line x1="957.1666666666667" y1="744" x2="957.1666666666667" y2="752" stroke="#E3E6EB" stroke-width="0.8"/>
<text x="958.2666666666668" y="751.5" font-size="7.1" fill="#7B818C" text-anchor="start" textLength="16.88" lengthAdjust="spacingAndGlyphs">02:40</text>
<line x1="990.5" y1="556.25" x2="990.5" y2="752" stroke="#D9DADE" stroke-width="1.1"/>
<text x="991.6" y="751.5" font-size="7.1" fill="#7B818C" text-anchor="start" textLength="16.88" lengthAdjust="spacingAndGlyphs">02:45</text>
<line x1="1023.8333333333334" y1="744" x2="1023.8333333333334" y2="752" stroke="#E3E6EB" stroke-width="0.8"/>
<text x="1024.9333333333334" y="751.5" font-size="7.1" fill="#7B818C" text-anchor="start" textLength="16.88" lengthAdjust="spacingAndGlyphs">02:50</text>
<line x1="1057.1666666666667" y1="744" x2="1057.1666666666667" y2="752" stroke="#E3E6EB" stroke-width="0.8"/>
<text x="1058.2666666666667" y="751.5" font-size="7.1" fill="#7B818C" text-anchor="start" textLength="16.88" lengthAdjust="spacingAndGlyphs">02:55</text>
<line x1="1090.5" y1="556.25" x2="1090.5" y2="752" stroke="#D9DADE" stroke-width="1.1"/>
<text x="1091.6" y="751.5" font-size="7.1" fill="#7B818C" text-anchor="start" textLength="16.88" lengthAdjust="spacingAndGlyphs">03:00</text>
<line x1="1123.8333333333335" y1="744" x2="1123.8333333333335" y2="752" stroke="#E3E6EB" stroke-width="0.8"/>
<text x="1124.9333333333334" y="751.5" font-size="7.1" fill="#7B818C" text-anchor="start" textLength="16.88" lengthAdjust="spacingAndGlyphs">03:05</text>
<line x1="1157.1666666666667" y1="744" x2="1157.1666666666667" y2="752" stroke="#E3E6EB" stroke-width="0.8"/>
<text x="691.6" y="758.6" font-size="7.0" fill="#7B818C" text-anchor="start" textLength="60" lengthAdjust="spacing">September 27, 2023</text>
<circle cx="790.5" cy="640.7375" r="1.7" fill="#fff" stroke="#66B196" stroke-width="0.8" stroke-opacity="0.75"/>
<circle cx="790.5" cy="697.0625" r="1.7" fill="#fff" stroke="#6A91C0" stroke-width="0.8" stroke-opacity="0.75"/>
<circle cx="790.5" cy="706.45" r="1.7" fill="#fff" stroke="#CA6386" stroke-width="0.8" stroke-opacity="0.75"/>
<circle cx="890.5" cy="650.125" r="1.7" fill="#fff" stroke="#CA6386" stroke-width="0.8" stroke-opacity="0.75"/>
<circle cx="890.5" cy="687.675" r="1.7" fill="#fff" stroke="#6A91C0" stroke-width="0.8" stroke-opacity="0.75"/>
<circle cx="990.5" cy="575.025" r="1.7" fill="#fff" stroke="#6A91C0" stroke-width="0.8" stroke-opacity="0.75"/>
<circle cx="990.5" cy="631.35" r="1.7" fill="#fff" stroke="#66B196" stroke-width="0.8" stroke-opacity="0.75"/>
<circle cx="990.5" cy="697.0625" r="1.7" fill="#fff" stroke="#CA6386" stroke-width="0.8" stroke-opacity="0.75"/>
<circle cx="1090.5" cy="603.1875" r="1.7" fill="#fff" stroke="#66B196" stroke-width="0.8" stroke-opacity="0.75"/>
<circle cx="1090.5" cy="687.675" r="1.7" fill="#fff" stroke="#6A91C0" stroke-width="0.8" stroke-opacity="0.75"/>
<circle cx="1090.5" cy="697.0625" r="1.7" fill="#fff" stroke="#CA6386" stroke-width="0.8" stroke-opacity="0.75"/>
<circle cx="1176.8" cy="561.3" r="2.7" fill="#66B196"/>
<text x="1184.3" y="563.9" font-size="8" fill="#60666F" text-anchor="start" textLength="51.5" lengthAdjust="spacing">lucian-API-V1 ›</text>
<text x="1184.3" y="573.9" font-size="8" fill="#60666F" text-anchor="start">prod</text>
<circle cx="1263.5" cy="558.9" r="0.85" fill="#535966"/>
<circle cx="1263.5" cy="561.8" r="0.85" fill="#535966"/>
<circle cx="1263.5" cy="564.6999999999999" r="0.85" fill="#535966"/>
<circle cx="1176.8" cy="583.9" r="2.7" fill="#6A91C0"/>
<text x="1184.3" y="586.5" font-size="8" fill="#60666F" text-anchor="start" textLength="51.5" lengthAdjust="spacing">lucian-API-V1 ›</text>
<text x="1184.3" y="596.5" font-size="8" fill="#60666F" text-anchor="start">beta</text>
<circle cx="1263.5" cy="581.5" r="0.85" fill="#535966"/>
<circle cx="1263.5" cy="584.4" r="0.85" fill="#535966"/>
<circle cx="1263.5" cy="587.3" r="0.85" fill="#535966"/>
<circle cx="1176.8" cy="606.5" r="2.7" fill="#CA6386"/>
<text x="1184.3" y="609.1" font-size="8" fill="#60666F" text-anchor="start" textLength="51.5" lengthAdjust="spacing">lucian-API-V1 ›</text>
<text x="1184.3" y="619.1" font-size="8" fill="#60666F" text-anchor="start">test</text>
<circle cx="1263.5" cy="604.1" r="0.85" fill="#535966"/>
<circle cx="1263.5" cy="607.0" r="0.85" fill="#535966"/>
<circle cx="1263.5" cy="609.9" r="0.85" fill="#535966"/>
<text x="926.5" y="772.0" font-size="8.4" font-weight="bold" fill="#484C55" text-anchor="middle" textLength="88" lengthAdjust="spacingAndGlyphs">@timestamp per minute</text>
<text x="10" y="799.5" font-size="8.1" font-weight="bold" fill="#343741" text-anchor="start" textLength="60" lengthAdjust="spacingAndGlyphs">Cache Hit Count</text>
<text x="33.5" y="1009.2" font-size="7.2" fill="#81878F" text-anchor="end" textLength="3.72" lengthAdjust="spacingAndGlyphs">0</text>
<line x1="39.6" y1="975.2666666666667" x2="519.6" y2="975.2666666666667" stroke="#E6E9EE" stroke-width="0.8" stroke-dasharray="2.5,2.5"/>
<text x="33.5" y="977.8666666666667" font-size="7.2" fill="#81878F" text-anchor="end" textLength="7.45" lengthAdjust="spacingAndGlyphs">50</text>
<line x1="39.6" y1="943.9333333333334" x2="519.6" y2="943.9333333333334" stroke="#E6E9EE" stroke-width="0.8" stroke-dasharray="2.5,2.5"/>
<text x="33.5" y="946.5333333333334" font-size="7.2" fill="#81878F" text-anchor="end" textLength="11.17" lengthAdjust="spacingAndGlyphs">100</text>
<line x1="39.6" y1="912.6" x2="519.6" y2="912.6" stroke="#E6E9EE" stroke-width="0.8" stroke-dasharray="2.5,2.5"/>
<text x="33.5" y="915.2" font-size="7.2" fill="#81878F" text-anchor="end" textLength="11.17" lengthAdjust="spacingAndGlyphs">150</text>
<line x1="39.6" y1="881.2666666666667" x2="519.6" y2="881.2666666666667" stroke="#E6E9EE" stroke-width="0.8" stroke-dasharray="2.5,2.5"/>
<text x="33.5" y="883.8666666666667" font-size="7.2" fill="#81878F" text-anchor="end" textLength="11.17" lengthAdjust="spacingAndGlyphs">200</text>
<line x1="39.6" y1="849.9333333333334" x2="519.6" y2="849.9333333333334" stroke="#E6E9EE" stroke-width="0.8" stroke-dasharray="2.5,2.5"/>
<text x="33.5" y="852.5333333333334" font-size="7.2" fill="#81878F" text-anchor="end" textLength="11.17" lengthAdjust="spacingAndGlyphs">250</text>
<line x1="39.6" y1="818.6" x2="519.6" y2="818.6" stroke="#E6E9EE" stroke-width="0.8" stroke-dasharray="2.5,2.5"/>
<text x="33.5" y="821.2" font-size="7.2" fill="#81878F" text-anchor="end" textLength="11.17" lengthAdjust="spacingAndGlyphs">300</text>
<line x1="39.6" y1="818.6" x2="39.6" y2="1006.6" stroke="#E9ECF1" stroke-width="1"/>
<line x1="39.6" y1="1006.9" x2="519.6" y2="1006.9" stroke="#E9ECF1" stroke-width="1"/>
<line x1="39.5" y1="1006.6" x2="39.5" y2="1014.6" stroke="#E3E6EB" stroke-width="0.8"/>
<text x="40.6" y="1014.1" font-size="7.1" fill="#7B818C" text-anchor="start" textLength="16.88" lengthAdjust="spacingAndGlyphs">02:00</text>
<line x1="73.76666666666667" y1="1006.6" x2="73.76666666666667" y2="1014.6" stroke="#E3E6EB" stroke-width="0.8"/>
<text x="74.86666666666666" y="1014.1" font-size="7.1" fill="#7B818C" text-anchor="start" textLength="16.88" lengthAdjust="spacingAndGlyphs">02:05</text>
<line x1="108.03333333333333" y1="1006.6" x2="108.03333333333333" y2="1014.6" stroke="#E3E6EB" stroke-width="0.8"/>
<text x="109.13333333333333" y="1014.1" font-size="7.1" fill="#7B818C" text-anchor="start" textLength="16.88" lengthAdjust="spacingAndGlyphs">02:10</text>
<line x1="142.3" y1="818.6" x2="142.3" y2="1014.6" stroke="#D9DADE" stroke-width="1.1"/>
<text x="143.4" y="1014.1" font-size="7.1" fill="#7B818C" text-anchor="start" textLength="16.88" lengthAdjust="spacingAndGlyphs">02:15</text>
<line x1="176.56666666666666" y1="1006.6" x2="176.56666666666666" y2="1014.6" stroke="#E3E6EB" stroke-width="0.8"/>
<text x="177.66666666666666" y="1014.1" font-size="7.1" fill="#7B818C" text-anchor="start" textLength="16.88" lengthAdjust="spacingAndGlyphs">02:20</text>
<line x1="210.83333333333334" y1="1006.6" x2="210.83333333333334" y2="1014.6" stroke="#E3E6EB" stroke-width="0.8"/>
<text x="211.93333333333334" y="1014.1" font-size="7.1" fill="#7B818C" text-anchor="start" textLength="16.88" lengthAdjust="spacingAndGlyphs">02:25</text>
<line x1="245.1" y1="818.6" x2="245.1" y2="1014.6" stroke="#D9DADE" stroke-width="1.1"/>
<text x="246.2" y="1014.1" font-size="7.1" fill="#7B818C" text-anchor="start" textLength="16.88" lengthAdjust="spacingAndGlyphs">02:30</text>
<line x1="279.3666666666667" y1="1006.6" x2="279.3666666666667" y2="1014.6" stroke="#E3E6EB" stroke-width="0.8"/>
<text x="280.4666666666667" y="1014.1" font-size="7.1" fill="#7B818C" text-anchor="start" textLength="16.88" lengthAdjust="spacingAndGlyphs">02:35</text>
<line x1="313.6333333333333" y1="1006.6" x2="313.6333333333333" y2="1014.6" stroke="#E3E6EB" stroke-width="0.8"/>
<text x="314.73333333333335" y="1014.1" font-size="7.1" fill="#7B818C" text-anchor="start" textLength="16.88" lengthAdjust="spacingAndGlyphs">02:40</text>
<line x1="347.90000000000003" y1="818.6" x2="347.90000000000003" y2="1014.6" stroke="#D9DADE" stroke-width="1.1"/>
<text x="349.00000000000006" y="1014.1" font-size="7.1" fill="#7B818C" text-anchor="start" textLength="16.88" lengthAdjust="spacingAndGlyphs">02:45</text>
<line x1="382.1666666666667" y1="1006.6" x2="382.1666666666667" y2="1014.6" stroke="#E3E6EB" stroke-width="0.8"/>
<text x="383.2666666666667" y="1014.1" font-size="7.1" fill="#7B818C" text-anchor="start" textLength="16.88" lengthAdjust="spacingAndGlyphs">02:50</text>
<line x1="416.43333333333334" y1="1006.6" x2="416.43333333333334" y2="1014.6" stroke="#E3E6EB" stroke-width="0.8"/>
<text x="417.53333333333336" y="1014.1" font-size="7.1" fill="#7B818C" text-anchor="start" textLength="16.88" lengthAdjust="spacingAndGlyphs">02:55</text>
<line x1="450.7" y1="818.6" x2="450.7" y2="1014.6" stroke="#D9DADE" stroke-width="1.1"/>
<text x="451.8" y="1014.1" font-size="7.1" fill="#7B818C" text-anchor="start" textLength="16.88" lengthAdjust="spacingAndGlyphs">03:00</text>
<line x1="484.9666666666667" y1="1006.6" x2="484.9666666666667" y2="1014.6" stroke="#E3E6EB" stroke-width="0.8"/>
<text x="486.0666666666667" y="1014.1" font-size="7.1" fill="#7B818C" text-anchor="start" textLength="16.88" lengthAdjust="spacingAndGlyphs">03:05</text>
<line x1="519.2333333333333" y1="1006.6" x2="519.2333333333333" y2="1014.6" stroke="#E3E6EB" stroke-width="0.8"/>
<text x="40.6" y="1021.2" font-size="7.0" fill="#7B818C" text-anchor="start" textLength="60" lengthAdjust="spacing">September 27, 2023</text>
<rect x="519.8" y="818.6" width="6.400000000000091" height="188.0" rx="0" fill="#E0E3E8"/>
<rect x="142.3" y="992.8133333333334" width="6.6" height="13.786666666666633" rx="0" fill="#66B196"/>
<rect x="142.3" y="979.6533333333333" width="6.6" height="13.160000000000082" rx="0" fill="#6A91C0"/>
<rect x="142.3" y="966.4933333333333" width="6.6" height="13.159999999999968" rx="0" fill="#CA6386"/>
<rect x="245.1" y="930.1466666666666" width="6.6" height="76.45333333333338" rx="0" fill="#66B196"/>
<rect x="245.1" y="909.4666666666667" width="6.6" height="20.67999999999995" rx="0" fill="#6A91C0"/>
<rect x="245.1" y="895.6800000000001" width="6.6" height="13.786666666666633" rx="0" fill="#CA6386"/>
<rect x="347.90000000000003" y="909.4666666666667" width="6.6" height="97.13333333333333" rx="0" fill="#66B196"/>
<rect x="347.90000000000003" y="881.2666666666667" width="6.6" height="28.200000000000045" rx="0" fill="#6A91C0"/>
<rect x="347.90000000000003" y="871.24" width="6.6" height="10.026666666666642" rx="0" fill="#CA6386"/>
<rect x="450.7" y="859.3333333333334" width="6.6" height="147.26666666666665" rx="0" fill="#66B196"/>
<rect x="450.7" y="849.9333333333334" width="6.6" height="9.399999999999977" rx="0" fill="#6A91C0"/>
<rect x="450.7" y="828.0" width="6.6" height="21.933333333333394" rx="0" fill="#CA6386"/>
<text x="282.5" y="1034.4" font-size="8.4" font-weight="bold" fill="#484C55" text-anchor="middle" textLength="88" lengthAdjust="spacingAndGlyphs">@timestamp per minute</text>
<text x="647.5" y="799.5" font-size="8.1" font-weight="bold" fill="#343741" text-anchor="start" textLength="67" lengthAdjust="spacingAndGlyphs">Cache Miss Count</text>
<text x="670.5" y="1009.2" font-size="7.2" fill="#81878F" text-anchor="end" textLength="3.72" lengthAdjust="spacingAndGlyphs">0</text>
<line x1="676.6" y1="969.0" x2="1157" y2="969.0" stroke="#E6E9EE" stroke-width="0.8" stroke-dasharray="2.5,2.5"/>
<text x="670.5" y="971.6" font-size="7.2" fill="#81878F" text-anchor="end" textLength="7.45" lengthAdjust="spacingAndGlyphs">50</text>
<line x1="676.6" y1="931.4" x2="1157" y2="931.4" stroke="#E6E9EE" stroke-width="0.8" stroke-dasharray="2.5,2.5"/>
<text x="670.5" y="934.0" font-size="7.2" fill="#81878F" text-anchor="end" textLength="11.17" lengthAdjust="spacingAndGlyphs">100</text>
<line x1="676.6" y1="893.8000000000001" x2="1157" y2="893.8000000000001" stroke="#E6E9EE" stroke-width="0.8" stroke-dasharray="2.5,2.5"/>
<text x="670.5" y="896.4000000000001" font-size="7.2" fill="#81878F" text-anchor="end" textLength="11.17" lengthAdjust="spacingAndGlyphs">150</text>
<line x1="676.6" y1="856.2" x2="1157" y2="856.2" stroke="#E6E9EE" stroke-width="0.8" stroke-dasharray="2.5,2.5"/>
<text x="670.5" y="858.8000000000001" font-size="7.2" fill="#81878F" text-anchor="end" textLength="11.17" lengthAdjust="spacingAndGlyphs">200</text>
<line x1="676.6" y1="818.6" x2="1157" y2="818.6" stroke="#E6E9EE" stroke-width="0.8" stroke-dasharray="2.5,2.5"/>
<text x="670.5" y="821.2" font-size="7.2" fill="#81878F" text-anchor="end" textLength="11.17" lengthAdjust="spacingAndGlyphs">250</text>
<line x1="676.6" y1="818.6" x2="676.6" y2="1006.6" stroke="#E9ECF1" stroke-width="1"/>
<line x1="676.6" y1="1006.9" x2="1157" y2="1006.9" stroke="#E9ECF1" stroke-width="1"/>
<line x1="676.8" y1="1006.6" x2="676.8" y2="1014.6" stroke="#E3E6EB" stroke-width="0.8"/>
<text x="677.9" y="1014.1" font-size="7.1" fill="#7B818C" text-anchor="start" textLength="16.88" lengthAdjust="spacingAndGlyphs">02:00</text>
<line x1="711.0833333333333" y1="1006.6" x2="711.0833333333333" y2="1014.6" stroke="#E3E6EB" stroke-width="0.8"/>
<text x="712.1833333333333" y="1014.1" font-size="7.1" fill="#7B818C" text-anchor="start" textLength="16.88" lengthAdjust="spacingAndGlyphs">02:05</text>
<line x1="745.3666666666666" y1="1006.6" x2="745.3666666666666" y2="1014.6" stroke="#E3E6EB" stroke-width="0.8"/>
<text x="746.4666666666666" y="1014.1" font-size="7.1" fill="#7B818C" text-anchor="start" textLength="16.88" lengthAdjust="spacingAndGlyphs">02:10</text>
<line x1="779.65" y1="818.6" x2="779.65" y2="1014.6" stroke="#D9DADE" stroke-width="1.1"/>
<text x="780.75" y="1014.1" font-size="7.1" fill="#7B818C" text-anchor="start" textLength="16.88" lengthAdjust="spacingAndGlyphs">02:15</text>
<line x1="813.9333333333333" y1="1006.6" x2="813.9333333333333" y2="1014.6" stroke="#E3E6EB" stroke-width="0.8"/>
<text x="815.0333333333333" y="1014.1" font-size="7.1" fill="#7B818C" text-anchor="start" textLength="16.88" lengthAdjust="spacingAndGlyphs">02:20</text>
<line x1="848.2166666666666" y1="1006.6" x2="848.2166666666666" y2="1014.6" stroke="#E3E6EB" stroke-width="0.8"/>
<text x="849.3166666666666" y="1014.1" font-size="7.1" fill="#7B818C" text-anchor="start" textLength="16.88" lengthAdjust="spacingAndGlyphs">02:25</text>
<line x1="882.5" y1="818.6" x2="882.5" y2="1014.6" stroke="#D9DADE" stroke-width="1.1"/>
<text x="883.6" y="1014.1" font-size="7.1" fill="#7B818C" text-anchor="start" textLength="16.88" lengthAdjust="spacingAndGlyphs">02:30</text>
<line x1="916.7833333333333" y1="1006.6" x2="916.7833333333333" y2="1014.6" stroke="#E3E6EB" stroke-width="0.8"/>
<text x="917.8833333333333" y="1014.1" font-size="7.1" fill="#7B818C" text-anchor="start" textLength="16.88" lengthAdjust="spacingAndGlyphs">02:35</text>
<line x1="951.0666666666666" y1="1006.6" x2="951.0666666666666" y2="1014.6" stroke="#E3E6EB" stroke-width="0.8"/>
<text x="952.1666666666666" y="1014.1" font-size="7.1" fill="#7B818C" text-anchor="start" textLength="16.88" lengthAdjust="spacingAndGlyphs">02:40</text>
<line x1="985.3499999999999" y1="818.6" x2="985.3499999999999" y2="1014.6" stroke="#D9DADE" stroke-width="1.1"/>
<text x="986.4499999999999" y="1014.1" font-size="7.1" fill="#7B818C" text-anchor="start" textLength="16.88" lengthAdjust="spacingAndGlyphs">02:45</text>
<line x1="1019.6333333333332" y1="1006.6" x2="1019.6333333333332" y2="1014.6" stroke="#E3E6EB" stroke-width="0.8"/>
<text x="1020.7333333333332" y="1014.1" font-size="7.1" fill="#7B818C" text-anchor="start" textLength="16.88" lengthAdjust="spacingAndGlyphs">02:50</text>
<line x1="1053.9166666666665" y1="1006.6" x2="1053.9166666666665" y2="1014.6" stroke="#E3E6EB" stroke-width="0.8"/>
<text x="1055.0166666666664" y="1014.1" font-size="7.1" fill="#7B818C" text-anchor="start" textLength="16.88" lengthAdjust="spacingAndGlyphs">02:55</text>
<line x1="1088.1999999999998" y1="818.6" x2="1088.1999999999998" y2="1014.6" stroke="#D9DADE" stroke-width="1.1"/>
<text x="1089.2999999999997" y="1014.1" font-size="7.1" fill="#7B818C" text-anchor="start" textLength="16.88" lengthAdjust="spacingAndGlyphs">03:00</text>
<line x1="1122.4833333333333" y1="1006.6" x2="1122.4833333333333" y2="1014.6" stroke="#E3E6EB" stroke-width="0.8"/>
<text x="1123.5833333333333" y="1014.1" font-size="7.1" fill="#7B818C" text-anchor="start" textLength="16.88" lengthAdjust="spacingAndGlyphs">03:05</text>
<line x1="1156.7666666666667" y1="1006.6" x2="1156.7666666666667" y2="1014.6" stroke="#E3E6EB" stroke-width="0.8"/>
<text x="677.9" y="1021.2" font-size="7.0" fill="#7B818C" text-anchor="start" textLength="60" lengthAdjust="spacing">September 27, 2023</text>
<rect x="1157" y="818.6" width="6.400000000000091" height="188.0" rx="0" fill="#E0E3E8"/>
<rect x="779.65" y="968.248" width="6.6" height="38.351999999999975" rx="0" fill="#66B196"/>
<rect x="779.65" y="944.936" width="6.6" height="23.312000000000012" rx="0" fill="#6A91C0"/>
<rect x="779.65" y="933.6560000000001" width="6.6" height="11.279999999999973" rx="0" fill="#CA6386"/>
<rect x="882.5" y="965.24" width="6.6" height="41.360000000000014" rx="0" fill="#66B196"/>
<rect x="882.5" y="923.88" width="6.6" height="41.360000000000014" rx="0" fill="#6A91C0"/>
<rect x="882.5" y="900.568" width="6.6" height="23.312000000000012" rx="0" fill="#CA6386"/>
<rect x="985.3499999999999" y="881.768" width="6.6" height="124.832" rx="0" fill="#66B196"/>
<rect x="985.3499999999999" y="854.696" width="6.6" height="27.072000000000003" rx="0" fill="#6A91C0"/>
<rect x="985.3499999999999" y="845.672" width="6.6" height="9.024000000000001" rx="0" fill="#CA6386"/>
<rect x="1088.1999999999998" y="890.04" width="6.6" height="116.56000000000006" rx="0" fill="#66B196"/>
<rect x="1088.1999999999998" y="882.52" width="6.6" height="7.519999999999982" rx="0" fill="#6A91C0"/>
<rect x="1088.1999999999998" y="841.1600000000001" width="6.6" height="41.3599999999999" rx="0" fill="#CA6386"/>
<text x="920" y="1034.4" font-size="8.4" font-weight="bold" fill="#484C55" text-anchor="middle" textLength="88" lengthAdjust="spacingAndGlyphs">@timestamp per minute</text>
</svg>
</body></html>
